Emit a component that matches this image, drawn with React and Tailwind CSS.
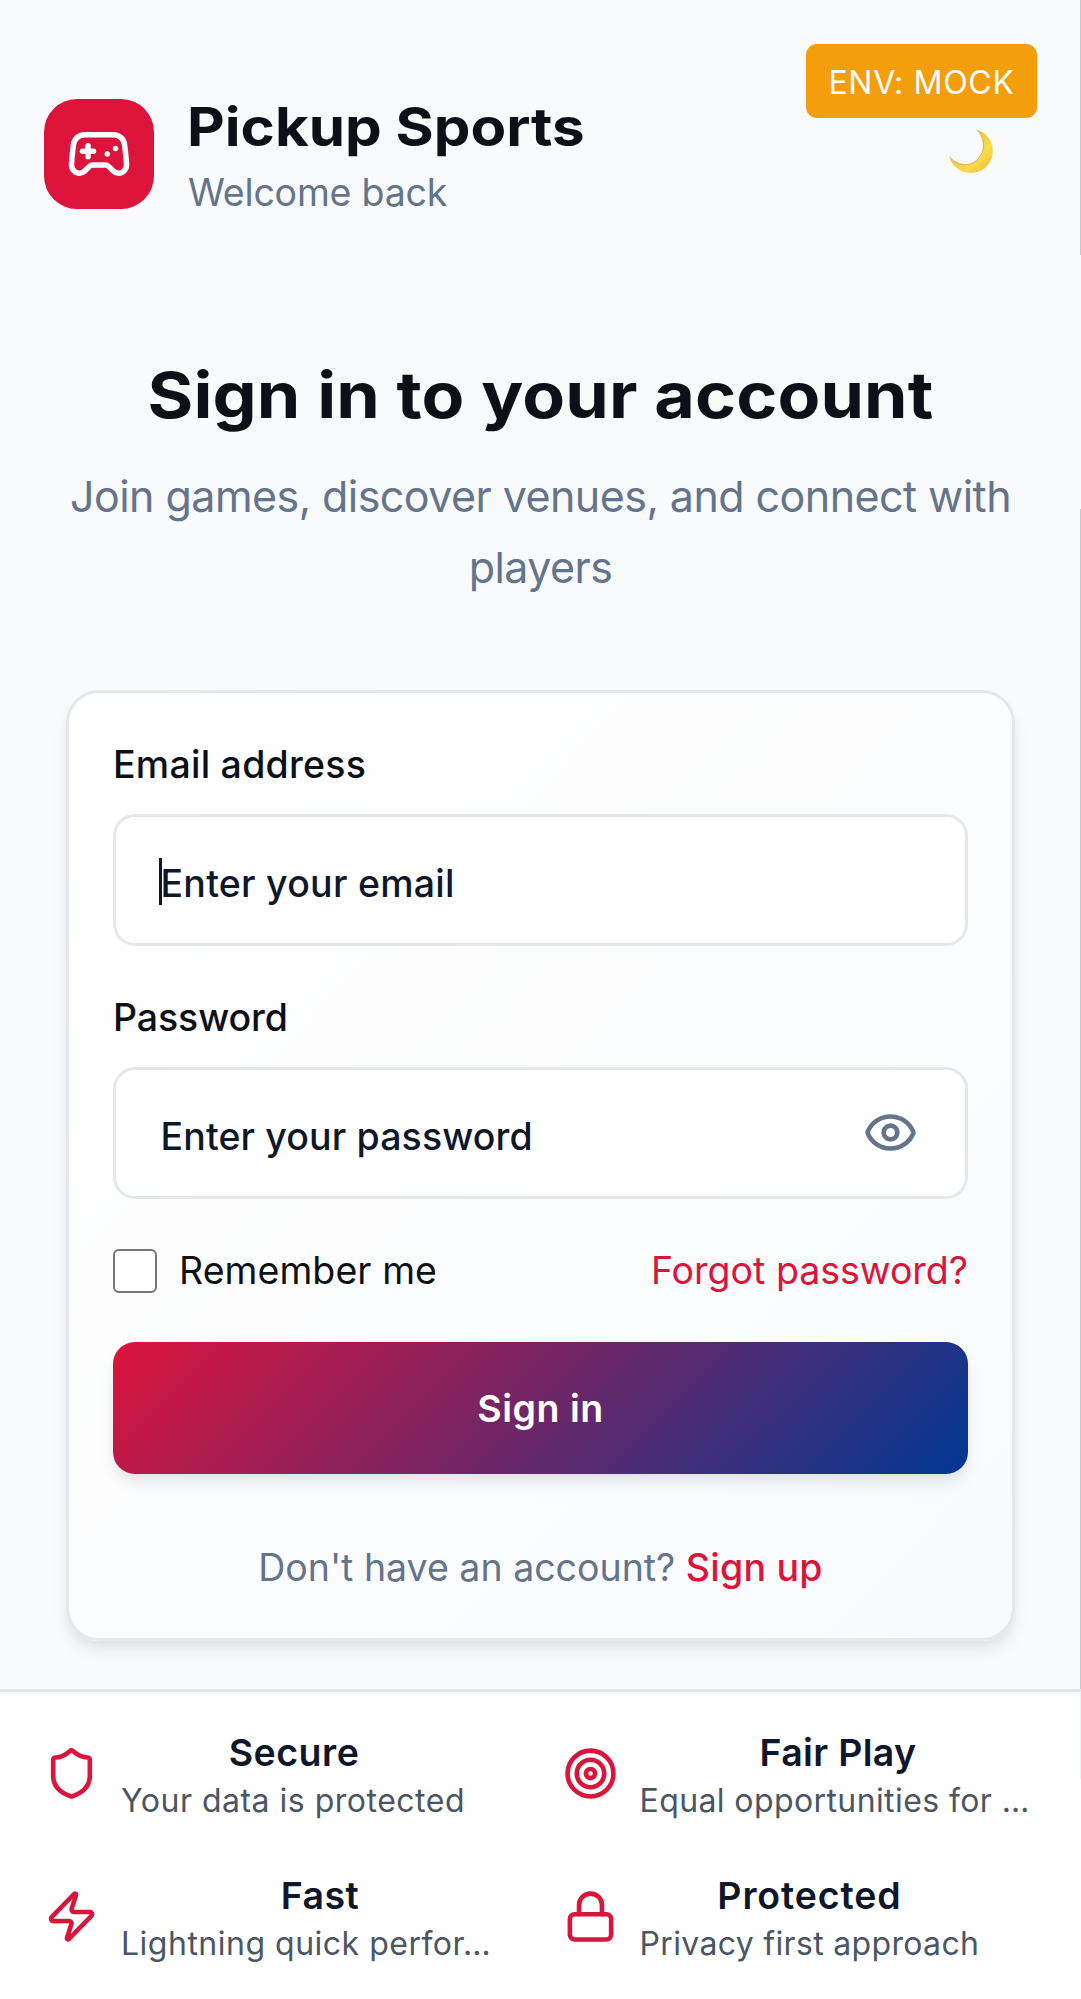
import React from "react";
import { Eye, Gamepad2, Lock, Shield, Target, Zap } from "lucide-react";

function MoonIcon({ className }) {
  return (
    <svg viewBox="507 326 132 134" className={className} aria-hidden="true">
      <defs>
        <linearGradient id="moon" x1="0" y1="0" x2="1" y2="1">
          <stop offset="0.3" stopColor="#efc02f" />
          <stop offset="0.65" stopColor="#f9dc4c" />
          <stop offset="1" stopColor="#f3b42c" />
        </linearGradient>
      </defs>
      <path
        d="M590 328 A66 66 0 1 1 509 410 A61 61 0 0 0 570 431 A61 61 0 0 0 590 328 Z"
        fill="url(#moon)"
      />
      <path
        d="M509 410 A61 61 0 0 0 570 431 A61 61 0 0 0 590 328"
        fill="none"
        stroke="#c99a2e"
        strokeWidth="2"
      />
    </svg>
  );
}

const features = [
  { icon: Shield, title: "Secure", titleClass: "tracking-[0.51px] pl-[2px]", text: "Your data is protected", textClass: "tracking-[0.5px]" },
  { icon: Target, title: "Fair Play", titleClass: "tracking-[0.32px]", text: "Equal opportunities for …", textClass: "tracking-[0.4px]", block: "w-[397px]" },
  { icon: Zap, title: "Fast", titleClass: "tracking-[0.4px]", text: "Lightning quick perfor…", textClass: "tracking-[0.5px]", block: "w-[398px]" },
  { icon: Lock, title: "Protected", titleClass: "tracking-[0.85px]", text: "Privacy first approach", textClass: "tracking-[0.33px]" },
];

function Feature({ icon: Icon, title, titleClass, text, textClass, block }) {
  return (
    <div className="flex items-center gap-[22px]">
      <Icon className="mb-[5px] size-[55px] shrink-0 text-[#dc143c]" strokeWidth={2} />
      <div className={`shrink-0 whitespace-nowrap ${block || ""}`}>
        <div className={`text-center text-[37.5px] leading-[50px] font-semibold text-[#0f172a] ${titleClass}`}>{title}</div>
        <div className={`text-[32px] leading-[45px] text-[#4b5563] ${textClass}`}>{text}</div>
      </div>
    </div>
  );
}

const labelClass = "block text-[37.5px] leading-[55px] font-medium text-[#0d1117]";
const inputClass =
  "block h-[132px] w-full rounded-[22px] border-3 border-[#e5e7e9] bg-white pr-11 pl-[44.5px] pt-[7px] text-[37.5px] font-medium text-[#0f172a] outline-none placeholder:text-[#0f172a] placeholder:opacity-100";

export default function App() {
  return (
    <div className="relative flex h-[1999px] w-full flex-col overflow-hidden bg-[#f9fafc] font-[Inter,sans-serif]">
      <header className="flex items-start pt-[94px] pr-[88px] pl-11">
        <div className="mt-[5px] flex size-[110px] items-center justify-center rounded-[33px] bg-[#dc143c]">
          <Gamepad2 className="size-[66px] text-white" strokeWidth={2} />
        </div>
        <div className="ml-[33px]">
          <h1 className="origin-left scale-x-[1.1] text-[53px] leading-[66px] font-bold text-[#0d1117]">Pickup Sports</h1>
          <p className="mt-[5px] pl-px text-[37.5px] leading-[55px] tracking-[-0.2px] text-[#64748b]">Welcome back</p>
        </div>
        <MoonIcon className="mt-[35px] ml-auto h-[45px] w-[44px]" />
      </header>
      <div className="absolute top-11 right-11 flex h-[74px] w-[231px] items-center justify-center rounded-[11px] bg-[#f59e0b] pt-[3px] text-[32px] tracking-[0.7px] whitespace-nowrap text-white">
        ENV: MOCK
      </div>

      <main className="px-[66px] pt-[135px]">
        <div className="text-center">
          <h2 className="scale-x-[1.1] text-[63.6px] leading-[80px] font-bold tracking-[0.1px] whitespace-nowrap text-[#0d1117]">Sign in to your account</h2>
          <p className="mt-[26px] text-[43px] leading-[71px] tracking-[-0.55px] text-[#64748b]">
            Join games, discover venues, and connect with players
          </p>
        </div>

        <form className="mt-[87px] h-[951px] rounded-[33px] border-3 border-[#e5e7eb] bg-linear-135 from-white to-[#f9fafc] p-11 shadow-[0_11px_16.5px_-2.75px_rgba(0,0,0,0.08),0_5.5px_11px_-2.75px_rgba(0,0,0,0.04)]">
          <label className={`${labelClass} tracking-[0.25px]`}>Email address</label>
          <div className="relative mt-[22px]">
            <input type="email" placeholder="Enter your email" className={`${inputClass} tracking-[0.25px]`} />
            <span className="absolute top-11 left-[46px] h-[47px] w-[3px] bg-[#0f172a]" />
          </div>

          <label className={`mt-11 tracking-[-0.1px] ${labelClass}`}>Password</label>
          <div className="relative mt-[22px]">
            <input type="password" placeholder="Enter your password" className={`${inputClass} tracking-[0.12px]`} />
            <Eye className="absolute top-[38px] right-[50px] size-[55px] text-[#64748b]" strokeWidth={2} />
          </div>

          <div className="mt-11 flex h-[55px] items-center justify-between text-[37.5px] leading-[55px]">
            <label className="flex items-center gap-[22px] tracking-[0.07px] text-[#0d1117]">
              <input type="checkbox" className="size-11 appearance-none rounded-[6px] border-[2.5px] border-[#767676] bg-white" />
              Remember me
            </label>
            <a className="text-[#dc143c]">Forgot password?</a>
          </div>

          <button
            type="button"
            className="mt-11 flex h-[132px] w-full items-center justify-center rounded-[22px] bg-linear-[135deg,#dc143c,#003893] pt-[2px] text-[37.5px] font-semibold tracking-[0.52px] text-white shadow-[0_11px_16.5px_-2.75px_rgba(0,0,0,0.08),0_5.5px_11px_-2.75px_rgba(0,0,0,0.04)]"
          >
            Sign in
          </button>

          <p className="mt-[66px] text-center text-[37.5px] leading-[55px] text-[#64748b]">
            Don't have an account? <a className="font-medium tracking-[0.25px] text-[#dc143c]">Sign up</a>
          </p>
        </form>
      </main>

      <footer className="relative mt-[48px] grid flex-1 grid-cols-2 content-start gap-x-11 gap-y-12 border-t-3 border-[#e5e7eb] bg-white px-11 pt-9">
        {features.map((f) => (
          <Feature key={f.title} {...f} />
        ))}
      </footer>

      <div className="absolute top-0 right-0 h-[255px] w-px bg-[#c5c9ce]" />
      <div className="absolute top-[509px] right-0 h-[1180px] w-px bg-[#c5c9ce]" />
      <div className="absolute top-[1692px] right-0 h-[87px] w-px bg-[#f0f1f2]" />
    </div>
  );
}
